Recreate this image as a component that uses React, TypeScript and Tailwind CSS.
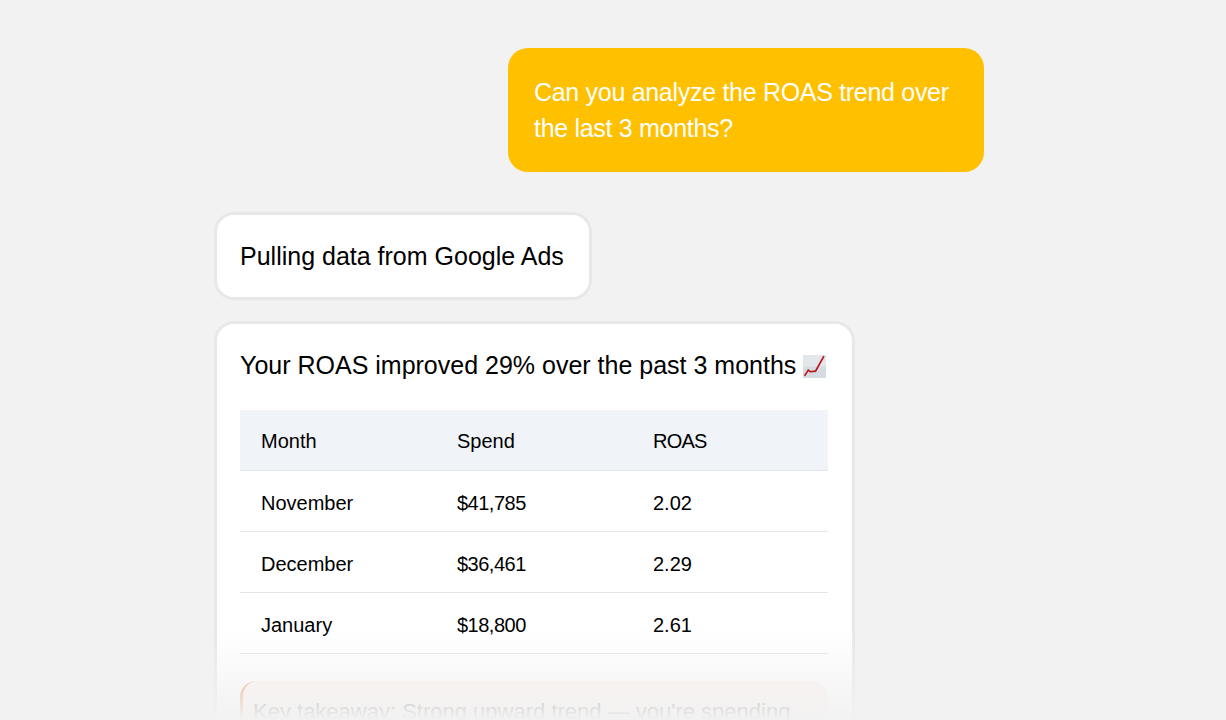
const rows = [
  { month: "November", spend: "$41,785", roas: "2.02" },
  { month: "December", spend: "$36,461", roas: "2.29" },
  { month: "January", spend: "$18,800", roas: "2.61" },
];

function ChartIcon() {
  return (
    <svg viewBox="0 0 22 22" className="ml-[7px] h-[23px] w-[23px] shrink-0">
      <rect width="22" height="22" fill="#d5dbe3" />
      <rect width="22" height="11" fill="#e3e7ec" />
      <path d="M1.5 20 L5 14.5 L7 16 L12 15.5 L20 1" fill="none" stroke="#b9161c" strokeWidth="1.6" />
    </svg>
  );
}

export default function App() {
  return (
    <div className="relative h-[720px] w-full overflow-hidden bg-[#f2f2f2] font-['Liberation_Sans',sans-serif] text-black">
      <div className="ml-[214px] flex w-[770px] flex-col pt-[48px]">
        <div className="w-[476px] self-end rounded-[20px] bg-[#ffc000] px-[26px] py-[26px] text-[25px] leading-[36px] tracking-[-0.3px] text-white">
          Can you analyze the ROAS trend over the last 3 months?
        </div>

        <div className="mt-[40px] h-[88px] w-[378px] whitespace-nowrap rounded-[20px] border-[3px] border-[#e8e8e8] bg-white px-[23px] text-[25px] leading-[82px]">
          Pulling data from Google Ads
        </div>

        <div className="mt-[21px] w-[641px] rounded-[20px] border-[3px] border-[#e8e8e8] bg-white pb-[40px] pl-[23px] pr-[24px] pt-[22px]">
          <div className="flex h-[40px] items-center whitespace-nowrap text-[25px]">
            Your ROAS improved 29% over the past 3 months
            <ChartIcon />
          </div>

          <div className="mt-[24px] text-[20px]">
            <div className="grid h-[61px] grid-cols-[196px_196px_1fr] items-center border-b border-[#e3e6ea] bg-[#f0f3f8] pl-[21px] pt-[2px]">
              <div>Month</div>
              <div>Spend</div>
              <div className="tracking-[-0.8px]">ROAS</div>
            </div>
            {rows.map((row) => (
              <div
                key={row.month}
                className="grid h-[61px] grid-cols-[196px_196px_1fr] items-center border-b border-[#e4e4e4] pl-[21px] pt-[3px]"
              >
                <div>{row.month}</div>
                <div className="tracking-[-0.5px]">{row.spend}</div>
                <div>{row.roas}</div>
              </div>
            ))}
          </div>

          <div className="mt-[27px] whitespace-nowrap rounded-[16px] border-l-[3px] border-[#f08a5d] bg-[#fdf3ee] px-[10px] pb-[16px] pt-[14px] text-[22px] leading-[34px] text-[#555555]">
            Key takeaway: Strong upward trend — you're spending
          </div>
        </div>
      </div>

      <div className="absolute inset-x-0 bottom-0 h-[90px] bg-gradient-to-b from-[#f2f2f2]/0 to-[#f2f2f2]" />
    </div>
  );
}
